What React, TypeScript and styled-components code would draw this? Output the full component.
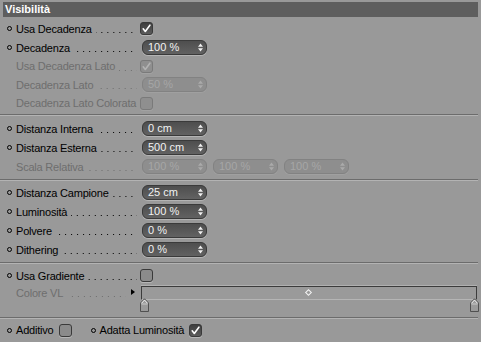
import React from "react";
import styled, { createGlobalStyle } from "styled-components";

const GlobalStyle = createGlobalStyle`
  html, body { margin: 0; padding: 0; background: #999999; }
  body { font-family: "Liberation Sans", Arial, sans-serif; font-size: 11px; }
`;

const Panel = styled.div`
  width: 481px;
  height: 342px;
  box-sizing: border-box;
  padding-top: 2px;
  background: #999999;
  display: flex;
  flex-direction: column;
  overflow: hidden;
  letter-spacing: -0.2px;
`;

const Header = styled.div`
  height: 15px;
  flex: none;
  margin: 0 3px;
  padding-left: 2px;
  background: #5e5e5e;
  color: #ffffff;
  font-weight: bold;
  line-height: 15px;
  letter-spacing: 0;
`;

const Section = styled.div<{ $pt: number; $pb: number }>`
  display: flex;
  flex: none;
  flex-direction: column;
  padding-top: ${(p) => p.$pt}px;
  padding-bottom: ${(p) => p.$pb}px;
`;

const Separator = styled.div`
  height: 1px;
  flex: none;
  margin-right: 3px;
  background: #6c6c6c;
  border-bottom: 1px solid #b3b3b3;
`;

const Row = styled.div<{ $h: number }>`
  height: ${(p) => p.$h}px;
  flex: none;
  display: flex;
  align-items: center;
`;

const LabelCell = styled.div<{ $disabled?: boolean; $w?: number }>`
  width: ${(p) => p.$w ?? 140}px;
  flex: none;
  box-sizing: border-box;
  padding-left: 7px;
  display: flex;
  align-items: center;
  color: ${(p) => (p.$disabled ? "#6e6e6e" : "#000000")};
  white-space: nowrap;
`;

const Bullet = styled.span<{ $hidden?: boolean }>`
  width: 5px;
  height: 5px;
  box-sizing: border-box;
  border: 1px solid #000;
  border-radius: 50%;
  margin-right: 4px;
  flex: none;
  visibility: ${(p) => (p.$hidden ? "hidden" : "visible")};
`;

const Leader = styled.span<{ $mr?: number }>`
  flex: 1;
  height: 1px;
  margin: 8px ${(p) => p.$mr ?? 3}px 0 4px;
  background-image: linear-gradient(to right, currentColor 1px, transparent 1px);
  background-size: 6px 1px;
  background-repeat: repeat-x;
  background-position: right top;
`;

const Controls = styled.div<{ $gap?: number }>`
  display: flex;
  align-items: center;
  gap: ${(p) => p.$gap ?? 6}px;
`;

const Box = styled.div<{ $checked?: boolean; $disabled?: boolean }>`
  width: 13px;
  height: 13px;
  box-sizing: border-box;
  border-radius: 3px;
  display: flex;
  align-items: center;
  justify-content: center;
  flex: none;
  background-color: ${(p) => (p.$disabled ? "#8f8f8f" : p.$checked ? "#4a4a4a" : "#8b8b8b")};
  background-image: ${(p) =>
    !p.$disabled && p.$checked ? "linear-gradient(#3e3e3e, #5c5c5c)" : "none"};
  border: 1px solid ${(p) => (p.$disabled ? "#7a7a7a" : "#3a3a3a")};
  box-shadow: 0 1px 0 ${(p) => (p.$disabled ? "#a2a2a2" : "#b6b6b6")};
`;

const Check: React.FC<{ checked?: boolean; disabled?: boolean }> = ({ checked, disabled }) => (
  <Box $checked={checked} $disabled={disabled}>
    {checked && (
      <svg width="11" height="11" viewBox="0 0 11 11">
        <path
          d="M2.2 5.8 L4.3 8.4 L8.9 2.2"
          fill="none"
          stroke={disabled ? "#b3b3b3" : "#ffffff"}
          strokeWidth="1.6"
          strokeLinecap="round"
          strokeLinejoin="round"
        />
      </svg>
    )}
  </Box>
);

const FieldBox = styled.div<{ $disabled?: boolean; $ml?: number }>`
  width: 65px;
  height: 15px;
  box-sizing: border-box;
  margin-left: ${(p) => p.$ml ?? 0}px;
  border-radius: 6px;
  display: flex;
  align-items: center;
  justify-content: space-between;
  padding: 0 3px 0 5px;
  flex: none;
  background-color: ${(p) => (p.$disabled ? "#8e8e8e" : "#585858")};
  background-image: ${(p) => (p.$disabled ? "none" : "linear-gradient(#4e4e4e, #626262)")};
  border: 1px solid ${(p) => (p.$disabled ? "#828282" : "#3a3a3a")};
  box-shadow: 0 1px 0 ${(p) => (p.$disabled ? "#a0a0a0" : "#b4b4b4")};
  color: ${(p) => (p.$disabled ? "#a6a6a6" : "#f2f2f2")};
  line-height: 13px;
  letter-spacing: 0;
`;

const Field: React.FC<{ value: string; disabled?: boolean; ml?: number }> = ({ value, disabled, ml }) => (
  <FieldBox $disabled={disabled} $ml={ml}>
    <span>{value}</span>
    <svg width="5" height="9" viewBox="0 0 5 9">
      <path d="M0 3.8 L2.5 0.6 L5 3.8 Z M0 5.2 L2.5 8.4 L5 5.2 Z" fill={disabled ? "#aaaaaa" : "#f0f0f0"} />
    </svg>
  </FieldBox>
);

const Label: React.FC<{ text: string; bullet?: boolean; disabled?: boolean; leader?: boolean }> = ({
  text,
  bullet = true,
  disabled,
  leader = true,
}) => (
  <LabelCell $disabled={disabled}>
    <Bullet $hidden={!bullet} />
    <span>{text}</span>
    {leader && <Leader />}
  </LabelCell>
);

const GradientRow = styled.div`
  display: flex;
  flex: none;
  align-items: flex-start;
  height: 26.5px;
`;

const GradLabel = styled(LabelCell)`
  height: 15px;
`;

const Arrow = styled.span`
  width: 0;
  height: 0;
  border-top: 3.5px solid transparent;
  border-bottom: 3.5px solid transparent;
  border-left: 4px solid #000;
  margin-right: 5px;
  margin-top: -1px;
  flex: none;
`;

const GradWidget = styled.div`
  width: 336px;
  margin-left: 1px;
  margin-top: 0.5px;
  position: relative;
  display: flex;
  flex-direction: column;
`;

const GradBox = styled.div`
  height: 14px;
  box-sizing: border-box;
  border-top: 1px solid #3c3c3c;
  border-left: 1px solid #3c3c3c;
  border-right: 1px solid #3c3c3c;
  border-bottom: 1px solid #b5b5b5;
  box-shadow: 0 -1px 0 #b0b0b0;
  background: #9a9a9a;
  position: relative;
`;

const Diamond = styled.span`
  position: absolute;
  left: 50%;
  top: 3px;
  width: 5px;
  height: 5px;
  margin-left: -3px;
  box-sizing: border-box;
  border: 1px solid #f4f4f4;
  transform: rotate(45deg);
`;

const Knob = styled.span<{ $pos: number }>`
  position: absolute;
  top: 12px;
  left: ${(p) => p.$pos}px;
  width: 9px;
  height: 14px;
`;

const KnobIcon = () => (
  <svg width="9" height="14" viewBox="0 0 9 14">
    <path d="M0.5 13.5 V5 L4.5 0.8 L8.5 5 V13.5 Z" fill="#9a9a9a" stroke="#505050" strokeWidth="1" />
    <path d="M1.5 5.3 L4.5 2 L7.5 5.3" fill="none" stroke="#f4f4f4" strokeWidth="1" />
    <path d="M1.5 6 H7.5" stroke="#c8c8c8" strokeWidth="1" />
  </svg>
);

const BottomRow = styled.div`
  height: 19px;
  flex: none;
  margin-top: 2px;
  display: flex;
  align-items: center;
`;

const InlineItem = styled.div<{ $ml?: number }>`
  display: flex;
  align-items: center;
  margin-left: ${(p) => p.$ml ?? 0}px;
  color: #000;
  white-space: nowrap;
`;

const InlineText = styled.span`
  margin-right: 5px;
`;

export default function App() {
  return (
    <>
      <GlobalStyle />
      <Panel>
        <Header>Visibilità</Header>

        <Section $pt={2.7} $pb={1.3}>
          <Row $h={18.6}>
            <Label text="Usa Decadenza" />
            <Check checked />
          </Row>
          <Row $h={18.6}>
            <Label text="Decadenza" />
            <Field value="100 %" ml={2} />
          </Row>
          <Row $h={18.6}>
            <Label text="Usa Decadenza Lato" bullet={false} disabled />
            <Check checked disabled />
          </Row>
          <Row $h={18.6}>
            <Label text="Decadenza Lato" bullet={false} disabled />
            <Field value="50 %" disabled ml={2} />
          </Row>
          <Row $h={18.6}>
            <Label text="Decadenza Lato Colorata" bullet={false} disabled leader={false} />
            <Check disabled />
          </Row>
        </Section>
        <Separator />

        <Section $pt={3.5} $pb={2.5}>
          <Row $h={19}>
            <Label text="Distanza Interna" />
            <Field value="0 cm" ml={2} />
          </Row>
          <Row $h={19}>
            <Label text="Distanza Esterna" />
            <Field value="500 cm" ml={2} />
          </Row>
          <Row $h={19}>
            <Label text="Scala Relativa" bullet={false} disabled />
            <Controls $gap={6}>
              <Field value="100 %" disabled ml={2} />
              <Field value="100 %" disabled />
              <Field value="100 %" disabled />
            </Controls>
          </Row>
        </Section>
        <Separator />

        <Section $pt={2.5} $pb={2.5}>
          <Row $h={19}>
            <Label text="Distanza Campione" />
            <Field value="25 cm" ml={2} />
          </Row>
          <Row $h={19}>
            <Label text="Luminosità" />
            <Field value="100 %" ml={2} />
          </Row>
          <Row $h={19}>
            <Label text="Polvere" />
            <Field value="0 %" ml={2} />
          </Row>
          <Row $h={19}>
            <Label text="Dithering" />
            <Field value="0 %" ml={2} />
          </Row>
        </Section>
        <Separator />

        <Section $pt={2.5} $pb={5}>
          <Row $h={19}>
            <Label text="Usa Gradiente" />
            <Check />
          </Row>
          <GradientRow>
            <GradLabel $disabled>
              <Bullet $hidden />
              <span>Colore VL</span>
              <Leader $mr={5} />
              <Arrow />
            </GradLabel>
            <GradWidget>
              <GradBox>
                <Diamond />
              </GradBox>
              <Knob $pos={-1}>
                <KnobIcon />
              </Knob>
              <Knob $pos={329}>
                <KnobIcon />
              </Knob>
            </GradWidget>
          </GradientRow>
        </Section>
        <Separator />

        <BottomRow>
          <InlineItem $ml={7}>
            <Bullet />
            <InlineText>Additivo</InlineText>
            <Check />
          </InlineItem>
          <InlineItem $ml={19}>
            <Bullet />
            <InlineText>Adatta Luminosità</InlineText>
            <Check checked />
          </InlineItem>
        </BottomRow>
      </Panel>
    </>
  );
}
